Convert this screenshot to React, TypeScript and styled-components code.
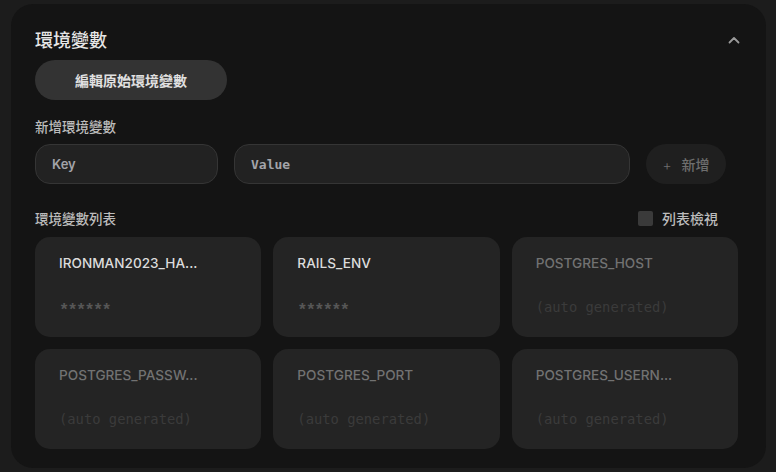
import React from "react";
import styled, { createGlobalStyle } from "styled-components";

const GlobalStyle = createGlobalStyle`
  html, body { margin: 0; padding: 0; background: #1c1c1c; }
  body { font-family: Inter, "Noto Sans CJK TC", sans-serif; }
  * { box-sizing: border-box; }
`;

const Page = styled.div`
  padding: 4px 10px 4px 11px;
  background: #1c1c1c;
  min-height: 472px;
`;

const Panel = styled.section`
  background: #141414;
  border-radius: 22px;
  padding: 24px 28px 19px 24px;
  height: 464px;
  overflow: hidden;
`;

const Header = styled.div`
  display: flex;
  align-items: center;
  justify-content: space-between;
  height: 22px;
`;

const Title = styled.h2`
  margin: 0;
  font-size: 18px;
  font-weight: 500;
  color: #e6e6e6;
  font-family: "Noto Sans CJK TC", sans-serif;
  line-height: 22px;
`;

const Chevron = styled.svg`
  width: 12px;
  height: 8px;
  margin-right: -2px;
  margin-top: 1px;
`;

const RawButton = styled.button`
  margin-top: 10px;
  width: 192px;
  height: 40px;
  border: none;
  border-radius: 20px;
  background: #333333;
  color: #e0e0e0;
  font-family: "Noto Sans CJK TC", sans-serif;
  font-size: 14px;
  font-weight: 700;
  padding: 0;
`;

const Label = styled.div`
  margin-top: 16px;
  font-family: "Noto Sans CJK TC", sans-serif;
  font-size: 13.5px;
  line-height: 20px;
  color: #bcbcbc;
  font-weight: 500;
`;

const InputRow = styled.div`
  margin-top: 8px;
  display: grid;
  grid-template-columns: 183px 396px 80px;
  gap: 16px;
`;

const Field = styled.div<{ $mono?: boolean }>`
  height: 40px;
  border-radius: 15px;
  background: #222222;
  border: 1px solid #353535;
  display: flex;
  align-items: center;
  padding-left: 16px;
  color: #a3a4a9;
  font-size: 13px;
  font-family: ${(p) =>
    p.$mono ? '"DejaVu Sans Mono", monospace' : 'Inter, sans-serif'};
  font-weight: ${(p) => (p.$mono ? 700 : 600)};
`;

const AddButton = styled.button`
  height: 40px;
  border: none;
  border-radius: 20px;
  background: #1f1f1f;
  color: #6e6e6e;
  font-family: "Noto Sans CJK TC", sans-serif;
  font-size: 14px;
  font-weight: 500;
  display: flex;
  align-items: center;
  justify-content: center;
  gap: 10px;
  padding: 0;
`;

const Plus = styled.span`
  font-family: Inter, sans-serif;
  font-size: 14px;
  font-weight: 300;
`;

const ListHeader = styled.div`
  margin-top: 24px;
  display: flex;
  align-items: center;
  justify-content: space-between;
  height: 20px;
`;

const ListLabel = styled.div`
  font-family: "Noto Sans CJK TC", sans-serif;
  font-size: 13.5px;
  color: #bcbcbc;
  font-weight: 500;
`;

const Toggle = styled.label`
  display: flex;
  align-items: center;
  gap: 9px;
  margin-right: 20px;
  font-family: "Noto Sans CJK TC", sans-serif;
  font-size: 14px;
  color: #bcbcbc;
  font-weight: 500;
`;

const Box = styled.span`
  width: 15px;
  height: 15px;
  border-radius: 2px;
  background: #3a3a3a;
`;

const Grid = styled.div`
  margin-top: 9px;
  display: grid;
  grid-template-columns: repeat(3, 1fr);
  gap: 12px 12px;
`;

const Card = styled.div`
  height: 100px;
  border-radius: 15px;
  background: #242424;
  padding: 16px 24px 0 24px;
  display: flex;
  flex-direction: column;
  gap: 24px;
`;

const CardKey = styled.div<{ $dim?: boolean }>`
  font-family: Inter, sans-serif;
  font-size: 13.6px;
  font-weight: 500;
  line-height: 20px;
  color: ${(p) => (p.$dim ? "#727272" : "#dcdcdc")};
  white-space: nowrap;
`;

const CardValue = styled.div<{ $auto?: boolean }>`
  font-family: ${(p) =>
    p.$auto ? '"DejaVu Sans Mono", monospace' : '"Liberation Mono", monospace'};
  font-size: ${(p) => (p.$auto ? "13.8px" : "17px")};
  letter-spacing: ${(p) => (p.$auto ? "0" : "-1.7px")};
  line-height: 20px;
  padding-top: ${(p) => (p.$auto ? "0" : "4px")};
  font-weight: ${(p) => (p.$auto ? 400 : 700)};
  color: ${(p) => (p.$auto ? "#3b3b3b" : "#565656")};
`;

const vars = [
  { k: "IRONMAN2023_HA...", v: "******", auto: false },
  { k: "RAILS_ENV", v: "******", auto: false },
  { k: "POSTGRES_HOST", v: "(auto generated)", auto: true },
  { k: "POSTGRES_PASSW...", v: "(auto generated)", auto: true },
  { k: "POSTGRES_PORT", v: "(auto generated)", auto: true },
  { k: "POSTGRES_USERN...", v: "(auto generated)", auto: true },
];

export default function App() {
  return (
    <>
      <GlobalStyle />
      <Page>
        <Panel>
          <Header>
            <Title>環境變數</Title>
            <Chevron viewBox="0 0 12 8">
              <path
                d="M1.5 6.5 L6 2 L10.5 6.5"
                fill="none"
                stroke="#9a9a9a"
                strokeWidth="1.8"
                strokeLinecap="round"
                strokeLinejoin="round"
              />
            </Chevron>
          </Header>
          <RawButton>編輯原始環境變數</RawButton>
          <Label>新增環境變數</Label>
          <InputRow>
            <Field>Key</Field>
            <Field $mono>Value</Field>
            <AddButton>
              <Plus>+</Plus>
              <span>新增</span>
            </AddButton>
          </InputRow>
          <ListHeader>
            <ListLabel>環境變數列表</ListLabel>
            <Toggle>
              <Box />
              列表檢視
            </Toggle>
          </ListHeader>
          <Grid>
            {vars.map((item) => (
              <Card key={item.k}>
                <CardKey $dim={item.auto}>{item.k}</CardKey>
                <CardValue $auto={item.auto}>{item.v}</CardValue>
              </Card>
            ))}
          </Grid>
        </Panel>
      </Page>
    </>
  );
}
